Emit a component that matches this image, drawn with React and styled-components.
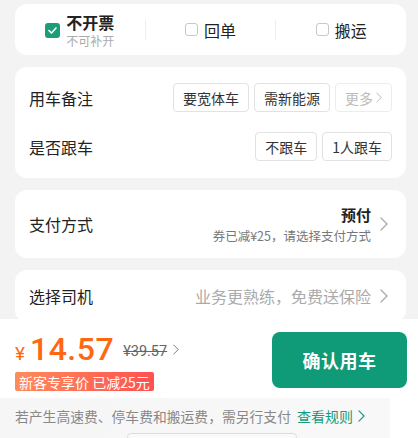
import React from 'react'
import styled, { createGlobalStyle } from 'styled-components'

const GlobalStyle = createGlobalStyle`
  html, body {
    margin: 0;
    padding: 0;
    background: #f3f3f3;
  }
  body {
    font-family: "Noto Sans CJK SC", "Noto Sans", sans-serif;
    color: #222;
  }
`

const Chevron = ({ color = '#999', w = 8, h = 14 }) => (
  <svg width={w} height={h} viewBox="0 0 8 14" fill="none">
    <polyline points="1,1 7,7 1,13" stroke={color} strokeWidth="1.3" strokeLinecap="round" strokeLinejoin="round" />
  </svg>
)

const App = () => {
  return (
    <Page>
      <GlobalStyle />
      <Scroll>
        <Card>
          <OptionRow>
            <Option>
              <Check $on>
                <svg width="9" height="7" viewBox="0 0 9 7" fill="none">
                  <polyline points="1,3.5 3.5,6 8,1" stroke="#fff" strokeWidth="1.6" strokeLinecap="round" strokeLinejoin="round" />
                </svg>
              </Check>
              <OptionText>
                <OptionTitle $bold>不开票</OptionTitle>
                <OptionSub>不可补开</OptionSub>
              </OptionText>
            </Option>
            <Divider />
            <Option>
              <Check />
              <OptionTitle>回单</OptionTitle>
            </Option>
            <Divider />
            <Option>
              <Check />
              <OptionTitle>搬运</OptionTitle>
            </Option>
          </OptionRow>
        </Card>

        <Card>
          <TagSection>
            <TagRow>
              <Label>用车备注</Label>
              <Tags>
                <Tag>要宽体车</Tag>
                <Tag>需新能源</Tag>
                <Tag $muted>更多<Chevron color="#bbb" w={6} h={11} /></Tag>
              </Tags>
            </TagRow>
            <TagRow>
              <Label>是否跟车</Label>
              <Tags>
                <Tag>不跟车</Tag>
                <Tag>1人跟车</Tag>
              </Tags>
            </TagRow>
          </TagSection>
        </Card>

        <Card>
          <LinkRow $tall>
            <Label>支付方式</Label>
            <RightSide>
              <PayInfo>
                <PayTitle>预付</PayTitle>
                <PaySub>券已减¥25，请选择支付方式</PaySub>
              </PayInfo>
              <Chevron color="#aaa" />
            </RightSide>
          </LinkRow>
        </Card>

        <Card>
          <LinkRow>
            <Label>选择司机</Label>
            <RightSide>
              <Hint>业务更熟练，免费送保险</Hint>
              <Chevron color="#aaa" />
            </RightSide>
          </LinkRow>
        </Card>
      </Scroll>

      <BottomBar>
        <PriceRow>
          <PriceBlock>
            <PriceLine>
              <Yen>¥</Yen>
              <Amount>14.57</Amount>
              <OldPrice>¥39.57</OldPrice>
              <Chevron color="#777" w={6} h={11} />
            </PriceLine>
            <Badge>新客专享价 已减25元</Badge>
          </PriceBlock>
          <ConfirmButton>确认用车</ConfirmButton>
        </PriceRow>
        <Footer>
          <FooterText>若产生高速费、停车费和搬运费，需另行支付</FooterText>
          <RuleLink>查看规则<Chevron color="#159c7b" w={7} h={12} /></RuleLink>
          <HomeBar />
        </Footer>
      </BottomBar>
    </Page>
  )
}

export default App

const Page = styled.div`
  width: 418px;
  height: 438px;
  display: flex;
  flex-direction: column;
  overflow: hidden;
`

const Scroll = styled.div`
  height: 315px;
  overflow: hidden;
  padding: 4px 12px 0 15px;
  display: flex;
  flex-direction: column;
  gap: 12px;
  flex-shrink: 0;
`

const Card = styled.div`
  background: #fff;
  border-radius: 12px;
  flex-shrink: 0;
`

const OptionRow = styled.div`
  height: 51px;
  display: grid;
  grid-template-columns: 1fr auto 1fr auto 1fr;
  align-items: center;
`

const Option = styled.div`
  display: flex;
  align-items: center;
  justify-content: center;
  gap: 6px;
`

const Check = styled.span`
  width: ${p => (p.$on ? '15px' : '13px')};
  height: ${p => (p.$on ? '15px' : '13px')};
  border-radius: 3px;
  box-sizing: border-box;
  display: flex;
  align-items: center;
  justify-content: center;
  background: ${p => (p.$on ? '#1a9d7b' : '#fff')};
  border: ${p => (p.$on ? 'none' : '1px solid #c8c8c8')};
  margin-top: ${p => (p.$on ? '1px' : '0')};
`

const OptionText = styled.div`
  display: flex;
  flex-direction: column;
  gap: 3px;
`

const OptionTitle = styled.span`
  font-size: 16px;
  line-height: 18px;
  font-weight: ${p => (p.$bold ? 700 : 400)};
  color: #222;
`

const OptionSub = styled.span`
  font-size: 12px;
  line-height: 13px;
  color: #aaa;
`

const Divider = styled.span`
  width: 1px;
  height: 20px;
  background: #eee;
`

const TagSection = styled.div`
  padding: 16px 14px 17px 14px;
  display: flex;
  flex-direction: column;
  gap: 20px;
`

const TagRow = styled.div`
  display: flex;
  align-items: center;
  justify-content: space-between;
`

const Label = styled.span`
  font-size: 16px;
  color: #222;
`

const Tags = styled.div`
  display: flex;
  gap: 5px;
`

const Tag = styled.span`
  height: 29px;
  box-sizing: border-box;
  padding: 0 9px;
  border: 1px solid ${p => (p.$muted ? '#ececec' : '#e2e2e2')};
  border-radius: 4px;
  display: flex;
  align-items: center;
  gap: 3px;
  font-size: 14px;
  color: ${p => (p.$muted ? '#bbb' : '#333')};
`

const LinkRow = styled.div`
  height: ${p => (p.$tall ? '68px' : '52px')};
  padding: 0 18px 0 14px;
  display: flex;
  align-items: center;
  justify-content: space-between;
`

const RightSide = styled.div`
  display: flex;
  align-items: center;
  gap: 9px;
`

const PayInfo = styled.div`
  display: flex;
  flex-direction: column;
  align-items: flex-end;
`

const PayTitle = styled.span`
  font-size: 15px;
  line-height: 20px;
  font-weight: 700;
  color: #222;
`

const PaySub = styled.span`
  font-size: 12.5px;
  line-height: 17px;
  margin-top: 2px;
  color: #777;
`

const Hint = styled.span`
  font-size: 16px;
  color: #aaa;
`

const BottomBar = styled.div`
  flex: 1;
  background: #fff;
  display: flex;
  flex-direction: column;
`

const PriceRow = styled.div`
  height: 79px;
  padding: 3px 11px 0 15px;
  box-sizing: border-box;
  display: flex;
  align-items: center;
  justify-content: space-between;
`

const PriceBlock = styled.div`
  display: flex;
  flex-direction: column;
  align-items: flex-start;
  gap: 3px;
`

const PriceLine = styled.div`
  display: flex;
  height: 40px;
  align-items: center;
`

const Yen = styled.span`
  font-family: Roboto, "Noto Sans", sans-serif;
  font-size: 19px;
  color: #ff6812;
  margin-top: 8px;
  margin-right: 5px;
`

const Amount = styled.span`
  font-family: Roboto, "Noto Sans", sans-serif;
  font-size: 32px;
  font-weight: 500;
  color: #ff6812;
  letter-spacing: 0.5px;
  margin-right: 9px;
`

const OldPrice = styled.span`
  font-family: Roboto, "Noto Sans", sans-serif;
  font-size: 14.5px;
  color: #666;
  text-decoration: line-through;
  margin-top: 4px;
  margin-right: 6px;
`

const Badge = styled.span`
  height: 19px;
  padding: 0 4px;
  display: flex;
  align-items: center;
  border-radius: 2px;
  background: linear-gradient(90deg, #ff8b5a, #ff5151);
  color: #fff;
  font-size: 14px;
`

const ConfirmButton = styled.button`
  width: 135px;
  height: 56px;
  border: none;
  border-radius: 8px;
  background: #0f9a78;
  color: #fff;
  font-family: "Noto Sans CJK SC", sans-serif;
  font-size: 18px;
  font-weight: 700;
  letter-spacing: 0.5px;
`

const Footer = styled.div`
  position: relative;
  flex: 1;
  margin-right: 28px;
  padding-left: 15px;
  background: linear-gradient(90deg, #f6f6f6, #f8f8f8);
  display: flex;
  align-items: center;
  gap: 6px;
  padding-bottom: 4px;
`

const FooterText = styled.span`
  font-size: 13.8px;
  color: #888;
`

const RuleLink = styled.span`
  display: flex;
  align-items: center;
  gap: 5px;
  font-size: 14px;
  color: #159c7b;
`

const HomeBar = styled.span`
  position: absolute;
  left: 127px;
  bottom: -3px;
  width: 168px;
  height: 6px;
  border: 1px solid #ddd;
  border-radius: 4px;
  background: #fafafa;
`
